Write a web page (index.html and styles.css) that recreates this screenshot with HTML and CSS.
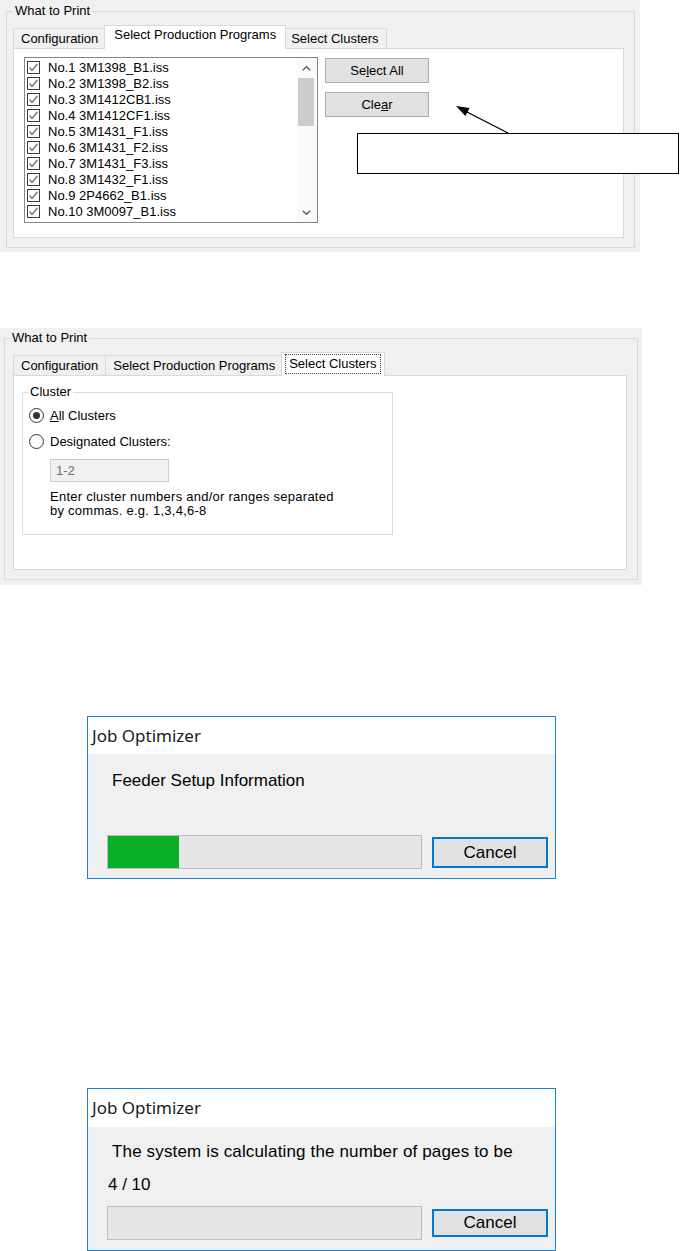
FILE: index.html
```html
<!DOCTYPE html>
<html lang="en">
<head>
<meta charset="utf-8">
<title>What to Print</title>
<link rel="stylesheet" href="styles.css">
</head>
<body>
<div class="page">

  <section class="shot shot1">
    <div class="panel panel1">
      <fieldset class="group">
        <legend>What to Print</legend>
        <div class="tabstrip">
          <div class="tab">Configuration</div>
          <div class="tab active">Select Production Programs</div>
          <div class="tab">Select Clusters</div>
        </div>
        <div class="tabpage page1">
          <div class="listbox">
            <ul class="items">
              <li><span class="cb"><svg viewBox="0 0 11 11"><polyline points="1.5,5.5 4,8.5 9.5,2"/></svg></span>No.1 3M1398_B1.iss</li>
              <li><span class="cb"><svg viewBox="0 0 11 11"><polyline points="1.5,5.5 4,8.5 9.5,2"/></svg></span>No.2 3M1398_B2.iss</li>
              <li><span class="cb"><svg viewBox="0 0 11 11"><polyline points="1.5,5.5 4,8.5 9.5,2"/></svg></span>No.3 3M1412CB1.iss</li>
              <li><span class="cb"><svg viewBox="0 0 11 11"><polyline points="1.5,5.5 4,8.5 9.5,2"/></svg></span>No.4 3M1412CF1.iss</li>
              <li><span class="cb"><svg viewBox="0 0 11 11"><polyline points="1.5,5.5 4,8.5 9.5,2"/></svg></span>No.5 3M1431_F1.iss</li>
              <li><span class="cb"><svg viewBox="0 0 11 11"><polyline points="1.5,5.5 4,8.5 9.5,2"/></svg></span>No.6 3M1431_F2.iss</li>
              <li><span class="cb"><svg viewBox="0 0 11 11"><polyline points="1.5,5.5 4,8.5 9.5,2"/></svg></span>No.7 3M1431_F3.iss</li>
              <li><span class="cb"><svg viewBox="0 0 11 11"><polyline points="1.5,5.5 4,8.5 9.5,2"/></svg></span>No.8 3M1432_F1.iss</li>
              <li><span class="cb"><svg viewBox="0 0 11 11"><polyline points="1.5,5.5 4,8.5 9.5,2"/></svg></span>No.9 2P4662_B1.iss</li>
              <li><span class="cb"><svg viewBox="0 0 11 11"><polyline points="1.5,5.5 4,8.5 9.5,2"/></svg></span>No.10 3M0097_B1.iss</li>
            </ul>
            <div class="scrollbar">
              <div class="sb-btn"><svg viewBox="0 0 9 5"><polyline points="0.7,4.3 4.5,0.7 8.3,4.3"/></svg></div>
              <div class="thumb"></div>
              <div class="track"></div>
              <div class="sb-btn"><svg viewBox="0 0 9 5"><polyline points="0.7,0.7 4.5,4.3 8.3,0.7"/></svg></div>
            </div>
          </div>
          <div class="btns">
            <button class="btn">Se<u>l</u>ect All</button>
            <button class="btn">Cle<u>a</u>r</button>
          </div>
        </div>
      </fieldset>
    </div>
    <div class="callout"></div>
    <svg class="arrow" viewBox="0 0 681 252" width="681" height="252">
      <line x1="508" y1="133" x2="466" y2="111.5"/>
      <polygon points="456,106 469.6,108 465.4,116"/>
    </svg>
  </section>

  <section class="shot panel panel2">
    <fieldset class="group">
      <legend>What to Print</legend>
      <div class="tabstrip">
        <div class="tab">Configuration</div>
        <div class="tab">Select Production Programs</div>
        <div class="tab active"><span class="focus">Select Clusters</span></div>
      </div>
      <div class="tabpage page2">
        <fieldset class="cluster">
          <legend>Cluster</legend>
          <div class="opt"><span class="radio on"></span><span><u>A</u>ll Clusters</span></div>
          <div class="opt opt2"><span class="radio"></span><span>Desi<u>g</u>nated Clusters:</span></div>
          <div class="field">1-2</div>
          <p class="note">Enter cluster numbers and/or ranges separated<br>by commas. e.g. 1,3,4,6-8</p>
        </fieldset>
      </div>
    </fieldset>
  </section>

  <section class="dialog d1">
    <div class="titlebar">Job Optimizer</div>
    <div class="dbody">
      <div class="msg">Feeder Setup Information</div>
      <div class="prow">
        <div class="progress"><div class="fill" style="width:22.7%"></div></div>
        <button class="cancel">Cancel</button>
      </div>
    </div>
  </section>

  <section class="dialog d2">
    <div class="titlebar">Job Optimizer</div>
    <div class="dbody">
      <div class="msg msg2">The system is calculating the number of pages to be</div>
      <div class="count">4 / 10</div>
      <div class="prow">
        <div class="progress"><div class="fill" style="width:0%"></div></div>
        <button class="cancel">Cancel</button>
      </div>
    </div>
  </section>

</div>
</body>
</html>
```
FILE: styles.css
```css
html, body {
  margin: 0;
  padding: 0;
  background: #ffffff;
}
body {
  font-family: "Liberation Sans", Arial, sans-serif;
  font-size: 13px;
  color: #000;
}
.page {
  display: flex;
  flex-direction: column;
  align-items: flex-start;
}

/* ---------- panels ---------- */
.shot1 {
  position: relative;
}
.panel {
  box-sizing: border-box;
  background: #f0f0f0;
}
.panel1 {
  width: 640px;
  padding: 3px 5px 4px 6px;
}
.panel2 {
  width: 642px;
  margin-top: 76px;
  padding: 2px 4px 5px 4px;
}
fieldset.group {
  margin: 0;
  min-width: 0;
  border: 1px solid #d9d9d9;
  padding: 6px 10px 9px 6px;
}
.panel2 fieldset.group {
  padding: 6px 10px 9px 8px;
}
legend {
  padding: 0 2px;
  font-size: 13px;
  line-height: 16px;
}
.panel2 fieldset.group > legend {
  margin-left: -3px;
}

/* ---------- tabs ---------- */
.tabstrip {
  display: flex;
  align-items: flex-end;
  height: 23px;
}
.tab {
  box-sizing: border-box;
  height: 20px;
  padding: 2px 7px 0;
  line-height: 16px;
  border: 1px solid #d9d9d9;
  border-bottom: none;
  background: #f0f0f0;
  white-space: nowrap;
}
.tab + .tab {
  margin-left: -1px;
}
.tab.active {
  position: relative;
  z-index: 1;
  height: 24px;
  margin: 0 -2px -1px;
  padding: 1px 9px 0;
  background: #fff;
}
.panel2 .tab.active {
  padding: 1px 3px 0;
  margin-right: 0;
}
.focus {
  display: inline-block;
  padding: 0 3px;
  border: 1px dotted #444;
  line-height: 18px;
}
.tabpage {
  box-sizing: border-box;
  border: 1px solid #d9d9d9;
  background: #fff;
}
.page1 {
  height: 190px;
  padding: 8px 0 0 10px;
  display: flex;
  align-items: flex-start;
}
.page2 {
  height: 195px;
  padding: 8px 0 0 8px;
}

/* ---------- list box ---------- */
.listbox {
  box-sizing: border-box;
  width: 294px;
  height: 166px;
  border: 1px solid #828790;
  background: #fff;
  display: flex;
}
.items {
  flex: 1;
  margin: 0;
  padding: 1px 0 0 2px;
  list-style: none;
}
.items li {
  height: 16px;
  display: flex;
  align-items: center;
  white-space: nowrap;
  font-size: 13px;
}
.cb {
  box-sizing: border-box;
  width: 13px;
  height: 13px;
  border: 1px solid #3c3c3c;
  margin-right: 8px;
  display: flex;
}
.cb svg {
  width: 11px;
  height: 11px;
}
.cb polyline {
  fill: none;
  stroke: #707070;
  stroke-width: 1.3;
}
.scrollbar {
  width: 20px;
  display: flex;
  flex-direction: column;
  background: #fafafa;
}
.sb-btn {
  height: 20px;
  display: flex;
  align-items: center;
  justify-content: center;
}
.sb-btn svg {
  width: 9px;
  height: 5px;
  margin-left: -2px;
}
.sb-btn polyline {
  fill: none;
  stroke: #606060;
  stroke-width: 1.4;
}
.thumb {
  height: 48px;
  margin: 0 3px 0 1px;
  background: #cdcdcd;
}
.track {
  flex: 1;
}
.btns {
  display: flex;
  flex-direction: column;
  gap: 9px;
  margin: 1px 0 0 7px;
}
.btn {
  box-sizing: border-box;
  width: 104px;
  height: 25px;
  padding: 0;
  border: 1px solid #adadad;
  background: #e1e1e1;
  color: #000;
  font-family: "Liberation Sans", Arial, sans-serif;
  font-size: 13px;
}

/* ---------- callout ---------- */
.callout {
  position: absolute;
  left: 357px;
  top: 133px;
  width: 322px;
  height: 41px;
  box-sizing: border-box;
  border: 1.5px solid #000;
  background: #fff;
}
.arrow {
  position: absolute;
  left: 0;
  top: 0;
  pointer-events: none;
}
.arrow line {
  stroke: #000;
  stroke-width: 1.4;
}
.arrow polygon {
  fill: #000;
}

/* ---------- cluster group ---------- */
fieldset.cluster {
  box-sizing: border-box;
  width: 371px;
  margin: 0;
  min-width: 0;
  border: 1px solid #dcdcdc;
  padding: 7px 8px 16px 6px;
}
fieldset.cluster > legend {
  margin-left: -1px;
}
.opt {
  display: flex;
  align-items: center;
  height: 16px;
}
.opt2 {
  margin-top: 10px;
}
.radio {
  box-sizing: border-box;
  width: 15px;
  height: 15px;
  border-radius: 50%;
  border: 1px solid #333;
  background: #fff;
  margin-right: 6px;
  display: flex;
  align-items: center;
  justify-content: center;
}
.radio.on::after {
  content: "";
  width: 7px;
  height: 7px;
  border-radius: 50%;
  background: #333;
}
.field {
  box-sizing: border-box;
  width: 119px;
  height: 23px;
  margin: 10px 0 0 21px;
  padding-left: 5px;
  border: 1px solid #cccccc;
  background: #f0f0f0;
  color: #6d6d6d;
  line-height: 21px;
}
.note {
  margin: 8px 0 0 21px;
  line-height: 14px;
  letter-spacing: 0.25px;
}

/* ---------- dialogs ---------- */
.dialog {
  box-sizing: border-box;
  width: 469px;
  height: 163px;
  margin-left: 87px;
  border: 1px solid #1883d7;
  background: #f0f0f0;
}
.d1 {
  margin-top: 131px;
}
.d2 {
  margin-top: 209px;
}
.titlebar {
  height: 37px;
  padding-left: 4px;
  background: #fff;
  font-family: "Noto Sans", "Open Sans", sans-serif;
  font-size: 17px;
  line-height: 37px;
  color: #1a1a1a;
}
.d2 .titlebar {
  height: 38px;
  line-height: 38px;
}
.dbody {
  padding: 17px 0 0 19px;
  font-size: 17px;
}
.d2 .dbody {
  padding-top: 15px;
}
.msg {
  margin-left: 5px;
  line-height: 20px;
}
.msg2 {
  letter-spacing: 0.15px;
}
.count {
  margin: 13px 0 0 1px;
  line-height: 20px;
}
.prow {
  display: flex;
  align-items: flex-start;
  gap: 10px;
  margin-top: 44px;
}
.d2 .prow {
  margin-top: 11px;
}
.progress {
  box-sizing: border-box;
  width: 315px;
  height: 34px;
  border: 1px solid #bcbcbc;
  background: #e6e6e6;
}
.fill {
  height: 100%;
  background: #06b025;
}
.cancel {
  box-sizing: border-box;
  width: 116px;
  height: 31px;
  margin-top: 2px;
  padding: 0;
  border: 2px solid #0078d7;
  background: #e1e1e1;
  color: #000;
  font-family: "Liberation Sans", Arial, sans-serif;
  font-size: 17px;
}
.d2 .cancel {
  height: 28px;
  margin-top: 3px;
}
```
